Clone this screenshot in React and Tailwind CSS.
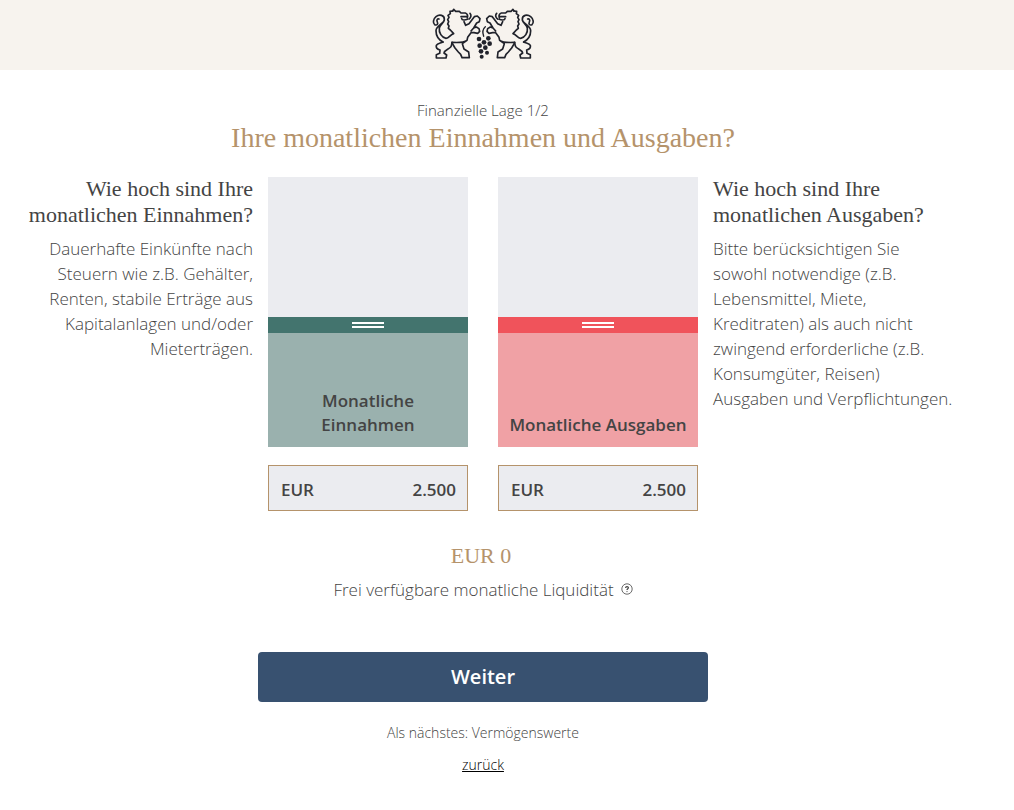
import { useState } from 'react';

const TRACK_HEIGHT = 270;
const MAX_AMOUNT = 5200;

export default function App() {
  const [income, setIncome] = useState(2500);
  const [expenses, setExpenses] = useState(2500);

  return (
    <div className="min-h-screen bg-white font-['Open_Sans',sans-serif] text-[#444444]">
      {/* HEADER */}
      <header className="bg-[#f7f3ee] h-[70px] pt-2 pr-12 flex justify-center items-start">
        <Logo />
      </header>

      <main className="pr-12 pt-7 pb-8">
        <div className="text-center">
          <p className="text-[15px] leading-6 font-light">Finanzielle Lage 1/2</p>
          <h1 className="font-['Liberation_Serif',serif] text-[28px] leading-8 text-[#b5936b]">
            Ihre monatlichen Einnahmen und Ausgaben?
          </h1>
        </div>

        {/* SLIDERS */}
        <div className="mt-[22px] flex justify-center">
          <Question
            title="Wie hoch sind Ihre monatlichen Einnahmen?"
            text="Dauerhafte Einkünfte nach Steuern wie z.B. Gehälter, Renten, stabile Erträge aus Kapitalanlagen und/oder Mieterträgen."
            className="text-right pr-[15px] pl-6"
          />

          <div className="mt-px flex shrink-0 gap-[30px]">
            <AmountSlider
              id="income"
              label="Monatliche Einnahmen"
              value={income}
              onChange={setIncome}
              handleColor="bg-[#43746e]"
              fillColor="bg-[#9ab1ae]"
            />
            <AmountSlider
              id="expenses"
              label="Monatliche Ausgaben"
              value={expenses}
              onChange={setExpenses}
              handleColor="bg-[#f0535b]"
              fillColor="bg-[#f0a1a5]"
            />
          </div>

          <Question
            title="Wie hoch sind Ihre monatlichen Ausgaben?"
            text="Bitte berücksichtigen Sie sowohl notwendige (z.B. Lebensmittel, Miete, Kreditraten) als auch nicht zwingend erforderliche (z.B. Konsumgüter, Reisen) Ausgaben und Verpflichtungen."
            className="pl-[15px] pr-3"
          />
        </div>

        {/* RESULT */}
        <div className="mt-8 text-center">
          <p className="font-['Liberation_Serif',serif] text-[22px] leading-[26px] text-[#b5936b] pr-1">
            EUR {formatAmount(income - expenses)}
          </p>
          <div className="mt-2 flex items-center justify-center gap-[7px] text-[17px] leading-[26px] font-light">
            <span>Frei verfügbare monatliche Liquidität</span>
            <button type="button" aria-label="Hilfe" className="pb-0.5 cursor-pointer">
              <HelpIcon />
            </button>
          </div>
        </div>

        {/* NAVIGATION */}
        <div className="mt-[49px] flex flex-col items-center">
          <button
            type="button"
            className="w-full max-w-[450px] h-[50px] rounded bg-[#385170] text-white text-xl font-semibold cursor-pointer"
          >
            Weiter
          </button>
          <p className="mt-[19px] text-sm leading-6 font-light">Als nächstes: Vermögenswerte</p>
          <a href="#zurueck" className="mt-2 text-sm leading-6 font-light text-black underline">
            zurück
          </a>
        </div>
      </main>
    </div>
  );
}

function formatAmount(amount) {
  return amount.toLocaleString('de-DE');
}

function Question({ title, text, className }) {
  return (
    <section className={`flex-1 max-w-[268px] ${className}`}>
      <h2 className="font-['Liberation_Serif',serif] text-[22px] leading-[26px]">{title}</h2>
      <p className="mt-2 text-[17px] leading-[25px] font-light">{text}</p>
    </section>
  );
}

function AmountSlider({ id, label, value, onChange, handleColor, fillColor }) {
  const height = Math.round((value / MAX_AMOUNT) * TRACK_HEIGHT);

  function handleText(e) {
    const amount = Number(e.target.value.replace(/\D/g, ''));
    onChange(Math.min(amount, MAX_AMOUNT));
  }

  return (
    <div className="w-[200px]">
      <div className="relative h-[270px] bg-[#ebecf0] flex flex-col justify-end overflow-hidden">
        <div className={`flex flex-col ${fillColor}`} style={{ height }}>
          <div className={`h-4 shrink-0 flex flex-col items-center justify-center gap-0.5 ${handleColor}`}>
            <span className="w-8 h-0.5 bg-white" />
            <span className="w-8 h-0.5 bg-white" />
          </div>
          <label
            htmlFor={`${id}-slider`}
            className="flex-1 flex items-end justify-center px-2 pb-[10px] text-center text-[17px] leading-6 font-semibold"
          >
            {label}
          </label>
        </div>
        <input
          id={`${id}-slider`}
          type="range"
          min={0}
          max={MAX_AMOUNT}
          step={100}
          value={value}
          onChange={(e) => onChange(Number(e.target.value))}
          className="absolute inset-0 w-full h-full opacity-0 cursor-row-resize [writing-mode:vertical-lr] [direction:rtl]"
        />
      </div>

      <div className="mt-[18px] h-[46px] flex items-center border border-[#b5936b] bg-[#ebecf0] pl-3 pr-[11px] pt-1 text-[17px] font-semibold">
        <label htmlFor={`${id}-amount`}>EUR</label>
        <input
          id={`${id}-amount`}
          type="text"
          inputMode="numeric"
          value={formatAmount(value)}
          onChange={handleText}
          className="flex-1 min-w-0 bg-transparent text-right outline-none"
        />
      </div>
    </div>
  );
}

function HelpIcon() {
  return (
    <svg width="12" height="12" viewBox="0 0 12 12" fill="none" stroke="#444444">
      <circle cx="6" cy="6" r="5.2" strokeWidth="0.8" />
      <path d="M4.6 4.9C4.6 3.2 7.4 3.2 7.4 4.8C7.4 5.7 6 5.8 6 7" strokeWidth="1.2" />
      <circle cx="6" cy="8.6" r="0.4" strokeWidth="0.5" />
    </svg>
  );
}

function Lion() {
  return (
    <g>
      {/* mane, back and tail */}
      <path d="M92 33L84 34L85 41L78 46L81 52L77 59L80 65L77 72L81 78L79 85L85 90L95 101C84 104 82 115 72 115C59 113 50 98 52 84C54 73 66 70 67 59C68 45 52 42 42 50C32 58 33 70 38 74M67 59C68 70 42 76 42 92C42 106 50 119 63 126M38 74C45 77 49 72 46 66C43 60 46 56 51 57" />
      {/* hind leg */}
      <path d="M63 126C54 130 46 130 43 136C41 144 48 148 54 150L53 160L43 164L43 174L72 174L74 165L66 159C67 150 80 148 86 141C90 136 89 131 90 127" />
      {/* head */}
      <path d="M92 33L95 28L101 34L112 34L117 39L130 39C137 41 138 48 136 53M117 50L134 50M119 56C120 61 129 61 136 58M144 40C149 45 147 53 141 57" />
      {/* arms, belly and front leg */}
      <path d="M126 65L131 76L141 71L157 50L166 48L174 56L172 65L164 69L155 84L147 93M155 84L163 81L171 86L173 94L167 100L156 98L147 98L137 112L135 121C126 128 106 128 90 127M135 121L121 131L126 147L140 156L142 173L120 173L116 163L109 156L99 144L91 130" />
    </g>
  );
}

function Logo() {
  return (
    <svg width="104" height="52" viewBox="27 24 312 156" fill="none" stroke="#20222b" strokeWidth="5" strokeLinejoin="round" strokeLinecap="round">
      <Lion />
      <g transform="translate(368 0) scale(-1 1)">
        <Lion />
      </g>
      {/* grapes */}
      <path d="M185 109C181 98 183 86 190 80" strokeWidth="4" />
      <g fill="#20222b" stroke="none">
        <circle cx="171" cy="117" r="7" />
        <circle cx="186" cy="127" r="7" />
        <circle cx="199" cy="115" r="7" />
        <circle cx="173" cy="137" r="7" />
        <circle cx="203" cy="131" r="7" />
        <circle cx="190" cy="143" r="7" />
        <circle cx="177" cy="154" r="7" />
        <circle cx="195" cy="158" r="6" />
        <circle cx="179" cy="170" r="6" />
      </g>
    </svg>
  );
}
